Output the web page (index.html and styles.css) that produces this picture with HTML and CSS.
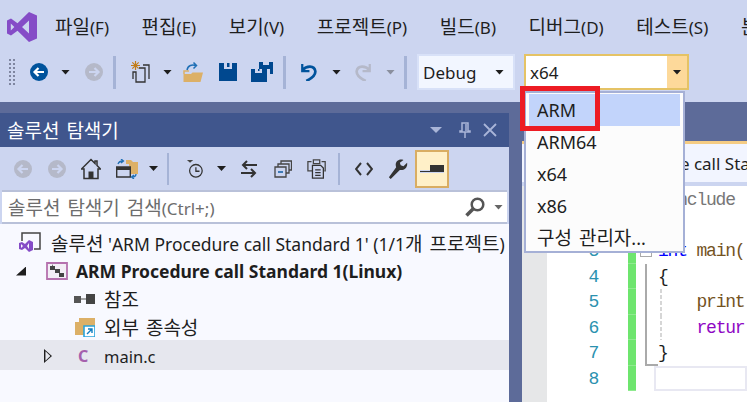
FILE: index.html
```html
<!DOCTYPE html>
<html lang="ko">
<head>
<meta charset="utf-8">
<title>Visual Studio</title>
<link rel="stylesheet" href="styles.css">
</head>
<body>
<div class="app">
  <header class="menubar">
    <svg class="logo" viewBox="0 0 30 30"><path fill="#854cc7" fill-rule="evenodd" d="M22 0L30 3.5V26.5L22 30L10.500 18.800L4 23.500L0 21.500V8.500L4 6.500L10.500 11.200ZM22 8.500L15 15L22 21.500ZM3.800 11.500V18.500L7.300 15Z"/></svg>
    <nav class="menu">
      <span><span class="ko">파일</span>(F)</span><span><span class="ko">편집</span>(E)</span><span><span class="ko">보기</span>(V)</span><span><span class="ko">프로젝트</span>(P)</span><span><span class="ko">빌드</span>(B)</span><span><span class="ko">디버그</span>(D)</span><span><span class="ko">테스트</span>(S)</span><span class="ko">분</span>
    </nav>
  </header>

  <div class="toolbar">
    <span class="grip"></span>
    <svg class="ic18 m14" viewBox="0 0 18 18"><circle cx="9" cy="9" r="9" fill="#00539c"/><path d="M14 9H5M8.500 5L4.500 9L8.500 13" fill="none" stroke="#fff" stroke-width="2.200"/></svg>
    <span class="caret m13"></span>
    <svg class="ic18 m15" viewBox="0 0 18 18"><circle cx="9" cy="9" r="9" fill="#b5b9c9"/><path d="M4 9H13M9.500 5L13.500 9L9.500 13" fill="none" stroke="#ccd5f0" stroke-width="2.200"/></svg>
    <span class="sep m10"></span>
    <svg class="ic20 m14" viewBox="0 0 20 22"><path d="M5.500 0V9M1 4.500H10M2.300 1.300L8.700 7.700M8.700 1.300L2.300 7.700" stroke="#c27d1a" stroke-width="1.200"/><path d="M9 7H15V21H6V11H3V18" fill="#ccd5f0" stroke="#333" stroke-width="1.300"/><path d="M13 4H19V18" fill="none" stroke="#333" stroke-width="1.300"/></svg>
    <span class="caret m13"></span>
    <svg class="ic20 m11" viewBox="0 0 20 20"><path d="M0.500 20V12H8L9.500 10.500H20L17.500 20Z" fill="#dcb067"/><path d="M1 12V9H6" fill="none" stroke="#dcb067" stroke-width="1.500"/><path d="M4 8C5 3 9 2.500 13 3.500M10.500 0.500L13.500 3.500L10.500 6.500" fill="none" stroke="#1f6fb5" stroke-width="1.500"/></svg>
    <svg class="ic18 m16" viewBox="0 0 18 18"><path fill="#00488f" fill-rule="evenodd" d="M0 0H18V18H0ZM5 0V6H13V0H10.500V4H8V0Z"/></svg>
    <svg class="ic22 m14" viewBox="0 0 22 20"><path fill="#00488f" fill-rule="evenodd" d="M8 0H22V12H19V7H8ZM12 0V3H18V0Z"/><path fill="#00488f" fill-rule="evenodd" d="M0 7H16V20H0ZM4 7V11H11V7H8.500V9H7V7Z"/></svg>
    <span class="sep m10"></span>
    <svg class="ic18 m14" viewBox="0 0 18 20"><path d="M2 7.500C6 3 15 2 16 9C16.500 13 12 17 6 20" fill="none" stroke="#00539c" stroke-width="3"/><path d="M1.500 1V9H9.500" fill="none" stroke="#00539c" stroke-width="2.500"/></svg>
    <span class="caret m14"></span>
    <svg class="ic18 m13" viewBox="0 0 18 20"><path d="M16 7.500C12 3 3 2 2 9C1.500 13 6 17 12 20" fill="none" stroke="#b5b9c9" stroke-width="3"/><path d="M16.500 1V9H8.500" fill="none" stroke="#b5b9c9" stroke-width="2.500"/></svg>
    <span class="caret caret-off m14"></span>
    <span class="sep m9"></span>
    <div class="combo debug m10"><span>Debug</span><span class="caret"></span></div>
    <div class="combo platform m9"><span class="combo-text">x64</span><span class="combo-btn"><span class="caret"></span></span></div>
  </div>

  <main class="workspace">
    <section class="explorer">
      <div class="titlebar">
        <span class="title ko">솔루션 탐색기</span>
        <span class="title-tools">
          <span class="caret caret-title"></span>
          <svg class="pin" viewBox="0 0 12 16"><path d="M3 1H9V9H11V10H1V9H3ZM6 10V16M7 2V9" fill="none" stroke="#a9b5d8" stroke-width="1.500"/></svg>
          <svg class="close" viewBox="0 0 14 14"><path d="M1 1L13 13M13 1L1 13" stroke="#a9b5d8" stroke-width="1.800"/></svg>
        </span>
      </div>
      <div class="subtools">
        <svg class="ic18 p14" viewBox="0 0 18 18"><circle cx="9" cy="9" r="9" fill="#b5b9c9"/><path d="M14 9H5M8.500 5L4.500 9L8.500 13" fill="none" stroke="#ccd5f0" stroke-width="2.200"/></svg>
        <svg class="ic18 m16" viewBox="0 0 18 18"><circle cx="9" cy="9" r="9" fill="#b5b9c9"/><path d="M4 9H13M9.500 5L13.500 9L9.500 13" fill="none" stroke="#ccd5f0" stroke-width="2.200"/></svg>
        <svg class="ic20 m15" viewBox="0 0 20 21"><path d="M10 1L0.500 10.500H3V20H17V10.500H19.500L16 7V2.500H14V5Z" fill="none" stroke="#333" stroke-width="1.500"/><path d="M7.500 13H12.500V20H7.500Z" fill="#333"/></svg>
        <svg class="ic22 m15" viewBox="0 0 22 20"><path d="M10 1H15L17 3H22V15H13V5H10Z" fill="#dcb067"/><path d="M0.700 8H14.300V18H0.700Z" fill="#ccd5f0" stroke="#333" stroke-width="1.400"/><path d="M1 8H14V11H1Z" fill="#333"/><path d="M2 5C3 2 5 2 7 2M5 0L7.500 2L5 4M20 15C20 18 18 18 16 18M18 16L15.500 18L18 20" fill="none" stroke="#1f6fb5" stroke-width="1.300"/></svg>
        <span class="caret m11"></span>
        <span class="sep sep-sub m9"></span>
        <svg class="ic18 m17" viewBox="0 0 18 20"><path d="M0 0H7L3.500 3Z" fill="#444"/><circle cx="10" cy="12" r="7" fill="#ccd5f0" stroke="#333" stroke-width="1.400"/><path d="M10 8V12.500H14" fill="none" stroke="#333" stroke-width="1.400"/></svg>
        <span class="caret m13"></span>
        <svg class="ic18 m14" viewBox="0 0 18 18"><path d="M17 5H3M7 1L3 5L7 9M1 13H15M11 9L15 13L11 17" fill="none" stroke="#333" stroke-width="2"/></svg>
        <svg class="ic18 m16" viewBox="0 0 18 18"><path d="M1 7H12V17H1Z" fill="#ccd5f0" stroke="#444" stroke-width="1.300"/><path d="M4 7V4H15V13H12M7 4V1H17.500V10H15" fill="none" stroke="#444" stroke-width="1.300"/><path d="M4 12H9" stroke="#00539c" stroke-width="1.400"/></svg>
        <svg class="ic22 m14" viewBox="0 0 22 22"><path d="M6 13H1V3H5M16 3H20V13H19" fill="none" stroke="#444" stroke-width="1.400"/><path d="M7 1H14V5H7Z" fill="none" stroke="#444" stroke-width="1.400"/><path d="M6 7H15L18 10V21H6Z" fill="#ccd5f0" stroke="#333" stroke-width="1.400"/><path d="M9 12H15M9 15H15M9 18H15" stroke="#333" stroke-width="1.300"/></svg>
        <span class="sep sep-sub m10"></span>
        <svg class="ic18 m15" viewBox="0 0 18 14"><path d="M6 1L1 7L6 13M12 1L17 7L12 13" fill="none" stroke="#333" stroke-width="2"/></svg>
        <svg class="ic22 m14" viewBox="0 0 22 22"><path d="M1 20L3 22L13 12C17 13 22 10 21 4L17 8L14 7L13 4L17 1C11 -1 7 4 9 9Z" fill="#333"/></svg>
        <span class="active-tool m6"><svg class="preview" viewBox="0 0 24 8"><path d="M0 6.500H24" stroke="#ccd5f0" stroke-width="3"/><path d="M0 6H10V0H24V7H0Z" fill="#333"/></svg></span>
      </div>
      <div class="search">
        <span class="search-text"><span class="ko">솔루션 탐색기 검색</span>(Ctrl+;)</span>
        <svg class="lens" viewBox="0 0 20 20"><circle cx="12.500" cy="7.500" r="5.800" fill="none" stroke="#555" stroke-width="2.500"/><path d="M8 12L1.500 18.500" stroke="#555" stroke-width="3.500"/></svg>
        <span class="caret caret-search"></span>
      </div>
      <ul class="tree">
        <li class="row row-solution">
          <svg class="sol-icon" viewBox="0 0 22 22"><path d="M3 9V1H21V17H15" fill="none" stroke="#444" stroke-width="1.500"/><path fill="#854cc7" fill-rule="evenodd" d="M10 8L14 10V18L10 20L6 16L3 18L0 17V11L3 10L6 12ZM10 11L8 14L10 17ZM2 12V16L4 14Z"/></svg>
          <span><span class="ko">솔루션</span> 'ARM Procedure call Standard 1' (1/1<span class="ko">개 프로젝트</span>)</span>
        </li>
        <li class="row row-project">
          <span class="tri-open"></span>
          <svg class="proj-icon" viewBox="0 0 22 18"><path d="M1 1H21V17H1Z" fill="#f3eef6" stroke="#b571ae" stroke-width="1.800"/><path d="M4 4H9V8H4ZM9 7H14V11H9ZM13 11H18V15H13ZM7 2V6H5M12 6V10M16 10V15" fill="#444"/></svg>
          <strong>ARM Procedure call Standard 1(Linux)</strong>
        </li>
        <li class="row row-child">
          <svg class="ref-icon" viewBox="0 0 22 12"><path d="M1 3H8V10H1Z" fill="#555"/><path d="M8 6H13" stroke="#888" stroke-width="1.500"/><path d="M13 1H22V11H13Z" fill="#444"/></svg>
          <span class="ko">참조</span>
        </li>
        <li class="row row-child">
          <svg class="dep-icon" viewBox="0 0 20 20"><path d="M0 18V5H4V1H20V10H10V18Z" fill="#dcb067"/><path d="M9 9H20V20H9Z" fill="#fff" stroke="#29a3dc" stroke-width="1.600"/><path d="M12 17L17 12M13 12H17V16" fill="none" stroke="#0f7cc0" stroke-width="1.400"/></svg>
          <span class="ko">외부 종속성</span>
        </li>
        <li class="row row-file">
          <span class="tri-closed"></span>
          <span class="c-icon">C</span>
          <span>main.c</span>
        </li>
      </ul>
    </section>

    <section class="editor">
      <div class="doc-accent"></div>
      <div class="doc-tab"><span>ARM Procedure call Standard 1</span></div>
      <div class="doc-rule"></div>
      <div class="code-area">
        <div class="gutter"></div>
        <div class="lines">
          <div class="line"><span class="num">1</span><span class="change"></span><span class="fold"></span><span class="code code-grey">#include</span></div>
          <div class="line"><span class="num">2</span><span class="change"></span><span class="fold"></span><span class="code"></span></div>
          <div class="line"><span class="num">3</span><span class="change"></span><span class="fold"><span class="fold-box"></span></span><span class="code"><span class="kw">int</span> <span class="fn">main(</span></span></div>
          <div class="line"><span class="num">4</span><span class="change"></span><span class="fold fold-line"></span><span class="code">{</span></div>
          <div class="line"><span class="num">5</span><span class="change"></span><span class="fold fold-line"></span><span class="code guide">    <span class="fn">print</span></span></div>
          <div class="line"><span class="num">6</span><span class="change"></span><span class="fold fold-line"></span><span class="code guide">    <span class="ctl">retur</span></span></div>
          <div class="line"><span class="num">7</span><span class="change"></span><span class="fold fold-end"></span><span class="code">}</span></div>
          <div class="line"><span class="num">8</span><span class="change"></span><span class="fold"></span><span class="code current"></span></div>
        </div>
      </div>
    </section>
  </main>

  <ul class="dropdown">
    <li class="selected">ARM</li>
    <li>ARM64</li>
    <li>x64</li>
    <li>x86</li>
    <li><span class="ko">구성 관리자</span>...</li>
  </ul>
  <div class="callout"></div>
</div>
</body>
</html>
```
FILE: styles.css
```css
* { box-sizing: border-box; }
html, body { margin: 0; padding: 0; }
body {
  width: 747px;
  height: 402px;
  overflow: hidden;
  background: #ccd5f0;
  font-family: "Noto Sans", "Noto Sans CJK KR", sans-serif;
  color: #1e1e1e;
}
ul { list-style: none; margin: 0; padding: 0; }
svg { display: block; flex: none; }
.ko { font-size: 19px; word-spacing: 2px; }

.app { position: relative; width: 747px; height: 402px; overflow: hidden; }

/* menu */
.menubar { display: flex; align-items: center; height: 44px; padding: 9px 0 0 7px; white-space: nowrap; }
.logo { width: 30px; height: 30px; }
.menu { display: flex; gap: 32.600px; margin-left: 18px; font-size: 17px; line-height: 24px; margin-top: 1px; }

/* main toolbar */
.toolbar { display: flex; align-items: center; height: 58px; padding: 10px 0 12px 8px; }
.grip {
  width: 8px; height: 28px;
  background-image: radial-gradient(#7f86a0 1px, transparent 1.200px);
  background-size: 4px 4px;
}
.ic18 { width: 18px; height: 18px; }
.ic20 { width: 20px; height: 22px; }
.ic22 { width: 22px; height: 20px; }
.caret { flex: none; display: block; width: 9px; height: 5px; background: #1e1e1e; clip-path: polygon(0 0, 100% 0, 50% 100%); }
.caret-off { background: #8a8f9e; }
.sep { flex: none; width: 3px; height: 33px; background: #a5b3d6; }
.m6 { margin-left: 6px; } .m9 { margin-left: 9px; } .m10 { margin-left: 10px; } .m11 { margin-left: 11px; }
.m13 { margin-left: 13px; } .m14 { margin-left: 14px; } .m15 { margin-left: 15px; }
.m16 { margin-left: 16px; } .m17 { margin-left: 17px; } .p14 { margin-left: 14px; }

.combo { display: flex; align-items: center; height: 36px; font-size: 17px; flex: none; }
.debug { width: 98px; justify-content: space-between; padding: 0 9px 0 4px; background: #f2f6ff; border: 2px solid #d8e1f8; }
.platform { width: 165px; background: #fff; border: 2px solid #e5c365; }
.combo-text { flex: 1; padding-left: 4px; }
.combo-btn { display: flex; align-items: center; justify-content: center; width: 20px; height: 100%; background: #fdd99a; }

/* workspace */
.workspace { display: flex; height: 300px; background: #5d6b99; padding-top: 11px; }
.explorer { width: 509px; display: flex; flex-direction: column; background: #ccd5f0; }
.titlebar { display: flex; align-items: center; justify-content: space-between; height: 34px; background: #40568d; color: #fff; padding: 0 12px 0 7px; }
.title-tools { display: flex; align-items: center; }
.caret-title { background: #a9b5d8; width: 12px; height: 6px; }
.pin { width: 12px; height: 16px; margin-left: 17px; }
.close { width: 14px; height: 14px; margin-left: 12px; }

.subtools { display: flex; align-items: center; height: 43px; }
.sep-sub { height: 32px; width: 2px; }
.active-tool { display: flex; align-items: center; justify-content: center; width: 34px; height: 38px; background: #fff0c8; border: 2px solid #d9ad62; flex: none; }
.preview { width: 24px; height: 8px; }

.search { display: flex; align-items: center; height: 34px; margin: 0 2px 0 2px; padding: 0 4px 0 6px; background: #fff; border: solid #b9c1d9; border-width: 2px 0 2px 0; }
.search-text { flex: 1; font-size: 17px; color: #6d6d6d; white-space: nowrap; }
.lens { width: 20px; height: 20px; }
.caret-search { margin-left: 9px; background: #666; }

.tree { flex: 1; background: #f8f9ff; padding-top: 4px; font-size: 17.500px; white-space: nowrap; overflow: hidden; }
.row { display: flex; align-items: center; height: 28px; padding-top: 2px; }
.row-solution { padding-left: 19px; }
.sol-icon { width: 22px; height: 22px; margin-right: 10px; }
.row-project { padding-left: 16px; }
.tri-open { width: 10px; height: 9px; background: #1e1e1e; clip-path: polygon(100% 0, 100% 100%, 0 100%); }
.proj-icon { width: 22px; height: 18px; margin: 0 8px 0 20px; }
.row-child { padding-left: 73px; }
.ref-icon { width: 22px; height: 12px; margin-right: 9px; }
.dep-icon { width: 20px; height: 20px; margin: 0 9px 0 2px; }
.row-file { height: 30px; background: #e6e7ee; padding-left: 44px; font-size: 16.500px; }
.tri-closed { width: 8px; height: 14px; background: #1e1e1e; clip-path: polygon(0 0, 100% 50%, 0 100%, 0 0, 18% 16%, 18% 84%, 80% 50%, 18% 16%); }
.c-icon { width: 26px; margin-left: 26px; color: #a560ad; font-weight: 700; font-size: 16px; }

/* editor */
.editor { flex: 1; margin-left: 13px; margin-top: 28px; display: flex; flex-direction: column; min-width: 0; }
.doc-accent { height: 3px; background: #f5cc84; }
.doc-tab { height: 38px; background: #f2f5ff; display: flex; align-items: center; padding-left: 44px; font-size: 17px; white-space: nowrap; overflow: hidden; }
.doc-rule { height: 4px; background: #ccd5f0; }
.code-area { flex: 1; display: flex; background: #fff; min-height: 0; }
.gutter { width: 25px; background: #e6e7e8; }
.lines { flex: 1; min-width: 0; padding-top: 1px; font-family: "Liberation Mono", monospace; font-size: 18px; letter-spacing: -1.200px; overflow: hidden; }
.line { display: flex; height: 25.500px; line-height: 25px; white-space: pre; }
.num { width: 51px; padding-top: 1px; text-align: right; color: #2b91af; }
.change { width: 8px; margin-left: 30px; background: #6ee56e; border-bottom: 1px solid #8fea8f; }
.fold { width: 22px; flex: none; }
.fold-box { display: block; width: 12px; height: 12px; margin: 7px 0 0 4px; background: #fff; border: 1px solid #aaa; }
.fold-line { border-left: 2px solid #aaa; margin-left: 9px; width: 13px; }
.fold-end { border-left: 2px solid #aaa; border-bottom: 2px solid #aaa; margin-left: 9px; width: 13px; }
.code { flex: 1; min-width: 0; padding-top: 1px; }
.code-grey { color: #777; }
.guide { background: repeating-linear-gradient(#d6d6d6 0 4px, transparent 4px 6px) 2px 0 / 2px 100% no-repeat; }
.kw { color: #0000ff; }
.fn { color: #74531f; }
.ctl { color: #8f08c4; }
.current { border: 2px solid #e8e8f2; margin-left: -4px; }

/* popup */
.dropdown {
  position: absolute; left: 524px; top: 91px; width: 161px; height: 162px;
  background: #fcfcfc; border: 2px solid #a5b0d6; padding: 1px 3px 0 3px; font-size: 18px;
}
.dropdown li { height: 32px; line-height: 32px; padding-left: 8px; }
.dropdown .selected { background: #c2d4fb; }
.callout { position: absolute; left: 520px; top: 86px; width: 80px; height: 45px; border: 5px solid #ed1c24; }
```
